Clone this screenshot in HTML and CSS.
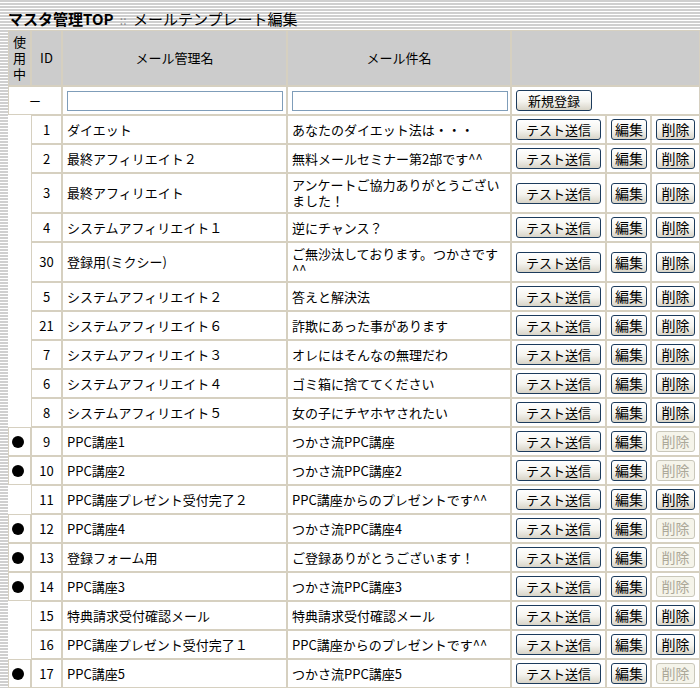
FILE: index.html
```html
<!DOCTYPE html>
<html lang="ja">
<head>
    <meta charset="UTF-8">
    <title>メールテンプレート編集</title>
    <link rel="stylesheet" href="styles.css">
</head>
<body>
    <div class="page-title"><b>マスタ管理TOP</b> <span class="sep">::</span> メールテンプレート編集</div>

    <table class="list">
        <colgroup>
            <col class="c-use">
            <col class="c-id">
            <col class="c-name">
            <col class="c-subject">
            <col class="c-test">
            <col class="c-edit">
            <col class="c-del">
        </colgroup>
        <thead>
            <tr>
                <th class="use">使用中</th>
                <th>ID</th>
                <th>メール管理名</th>
                <th>メール件名</th>
                <th colspan="3">&nbsp;</th>
            </tr>
        </thead>
        <tbody>
            <!-- 新規登録 -->
            <tr>
                <td colspan="2" class="id">－</td>
                <td><input type="text" class="field"></td>
                <td><input type="text" class="field"></td>
                <td colspan="3"><button type="button" class="btn btn-new">新規登録</button></td>
            </tr>
            <tr>
                <td class="use"></td><td class="id">1</td>
                <td>ダイエット</td><td>あなたのダイエット法は・・・</td>
                <td><button type="button" class="btn btn-test">テスト送信</button></td>
                <td><button type="button" class="btn btn-edit">編集</button></td>
                <td><button type="button" class="btn btn-del">削除</button></td>
            </tr>
            <tr>
                <td class="use"></td><td class="id">2</td>
                <td>最終アフィリエイト２</td><td>無料メールセミナー第2部です^^</td>
                <td><button type="button" class="btn btn-test">テスト送信</button></td>
                <td><button type="button" class="btn btn-edit">編集</button></td>
                <td><button type="button" class="btn btn-del">削除</button></td>
            </tr>
            <tr>
                <td class="use"></td><td class="id">3</td>
                <td>最終アフィリエイト</td><td>アンケートご協力ありがとうございました！</td>
                <td><button type="button" class="btn btn-test">テスト送信</button></td>
                <td><button type="button" class="btn btn-edit">編集</button></td>
                <td><button type="button" class="btn btn-del">削除</button></td>
            </tr>
            <tr>
                <td class="use"></td><td class="id">4</td>
                <td>システムアフィリエイト１</td><td>逆にチャンス？</td>
                <td><button type="button" class="btn btn-test">テスト送信</button></td>
                <td><button type="button" class="btn btn-edit">編集</button></td>
                <td><button type="button" class="btn btn-del">削除</button></td>
            </tr>
            <tr>
                <td class="use"></td><td class="id">30</td>
                <td>登録用(ミクシー)</td><td>ご無沙汰しております。つかさです^^</td>
                <td><button type="button" class="btn btn-test">テスト送信</button></td>
                <td><button type="button" class="btn btn-edit">編集</button></td>
                <td><button type="button" class="btn btn-del">削除</button></td>
            </tr>
            <tr>
                <td class="use"></td><td class="id">5</td>
                <td>システムアフィリエイト２</td><td>答えと解決法</td>
                <td><button type="button" class="btn btn-test">テスト送信</button></td>
                <td><button type="button" class="btn btn-edit">編集</button></td>
                <td><button type="button" class="btn btn-del">削除</button></td>
            </tr>
            <tr>
                <td class="use"></td><td class="id">21</td>
                <td>システムアフィリエイト６</td><td>詐欺にあった事があります</td>
                <td><button type="button" class="btn btn-test">テスト送信</button></td>
                <td><button type="button" class="btn btn-edit">編集</button></td>
                <td><button type="button" class="btn btn-del">削除</button></td>
            </tr>
            <tr>
                <td class="use"></td><td class="id">7</td>
                <td>システムアフィリエイト３</td><td>オレにはそんなの無理だわ</td>
                <td><button type="button" class="btn btn-test">テスト送信</button></td>
                <td><button type="button" class="btn btn-edit">編集</button></td>
                <td><button type="button" class="btn btn-del">削除</button></td>
            </tr>
            <tr>
                <td class="use"></td><td class="id">6</td>
                <td>システムアフィリエイト４</td><td>ゴミ箱に捨ててください</td>
                <td><button type="button" class="btn btn-test">テスト送信</button></td>
                <td><button type="button" class="btn btn-edit">編集</button></td>
                <td><button type="button" class="btn btn-del">削除</button></td>
            </tr>
            <tr>
                <td class="use"></td><td class="id">8</td>
                <td>システムアフィリエイト５</td><td>女の子にチヤホヤされたい</td>
                <td><button type="button" class="btn btn-test">テスト送信</button></td>
                <td><button type="button" class="btn btn-edit">編集</button></td>
                <td><button type="button" class="btn btn-del">削除</button></td>
            </tr>
            <tr>
                <td class="use"><span class="dot"></span></td><td class="id">9</td>
                <td>PPC講座1</td><td>つかさ流PPC講座</td>
                <td><button type="button" class="btn btn-test">テスト送信</button></td>
                <td><button type="button" class="btn btn-edit">編集</button></td>
                <td><button type="button" class="btn btn-del" disabled>削除</button></td>
            </tr>
            <tr>
                <td class="use"><span class="dot"></span></td><td class="id">10</td>
                <td>PPC講座2</td><td>つかさ流PPC講座2</td>
                <td><button type="button" class="btn btn-test">テスト送信</button></td>
                <td><button type="button" class="btn btn-edit">編集</button></td>
                <td><button type="button" class="btn btn-del" disabled>削除</button></td>
            </tr>
            <tr>
                <td class="use"></td><td class="id">11</td>
                <td>PPC講座プレゼント受付完了２</td><td>PPC講座からのプレゼントです^^</td>
                <td><button type="button" class="btn btn-test">テスト送信</button></td>
                <td><button type="button" class="btn btn-edit">編集</button></td>
                <td><button type="button" class="btn btn-del">削除</button></td>
            </tr>
            <tr>
                <td class="use"><span class="dot"></span></td><td class="id">12</td>
                <td>PPC講座4</td><td>つかさ流PPC講座4</td>
                <td><button type="button" class="btn btn-test">テスト送信</button></td>
                <td><button type="button" class="btn btn-edit">編集</button></td>
                <td><button type="button" class="btn btn-del" disabled>削除</button></td>
            </tr>
            <tr>
                <td class="use"><span class="dot"></span></td><td class="id">13</td>
                <td>登録フォーム用</td><td>ご登録ありがとうございます！</td>
                <td><button type="button" class="btn btn-test">テスト送信</button></td>
                <td><button type="button" class="btn btn-edit">編集</button></td>
                <td><button type="button" class="btn btn-del" disabled>削除</button></td>
            </tr>
            <tr>
                <td class="use"><span class="dot"></span></td><td class="id">14</td>
                <td>PPC講座3</td><td>つかさ流PPC講座3</td>
                <td><button type="button" class="btn btn-test">テスト送信</button></td>
                <td><button type="button" class="btn btn-edit">編集</button></td>
                <td><button type="button" class="btn btn-del" disabled>削除</button></td>
            </tr>
            <tr>
                <td class="use"></td><td class="id">15</td>
                <td>特典請求受付確認メール</td><td>特典請求受付確認メール</td>
                <td><button type="button" class="btn btn-test">テスト送信</button></td>
                <td><button type="button" class="btn btn-edit">編集</button></td>
                <td><button type="button" class="btn btn-del">削除</button></td>
            </tr>
            <tr>
                <td class="use"></td><td class="id">16</td>
                <td>PPC講座プレゼント受付完了１</td><td>PPC講座からのプレゼントです^^</td>
                <td><button type="button" class="btn btn-test">テスト送信</button></td>
                <td><button type="button" class="btn btn-edit">編集</button></td>
                <td><button type="button" class="btn btn-del">削除</button></td>
            </tr>
            <tr>
                <td class="use"><span class="dot"></span></td><td class="id">17</td>
                <td>PPC講座5</td><td>つかさ流PPC講座5</td>
                <td><button type="button" class="btn btn-test">テスト送信</button></td>
                <td><button type="button" class="btn btn-edit">編集</button></td>
                <td><button type="button" class="btn btn-del" disabled>削除</button></td>
            </tr>
        </tbody>
    </table>
</body>
</html>
```

FILE: styles.css
```css
body {
    margin: 8px 0 0 8px;
    font-family: "Noto Sans CJK JP", "Noto Sans", sans-serif;
    font-size: 13px;
    color: #000;
    background: repeating-linear-gradient(to bottom, #cfcfcf 0, #cfcfcf 2px, #fff 2px, #fff 3px);
}

.page-title {
    height: 22px;
    line-height: 22px;
    font-size: 15px;
}

.page-title .sep {
    color: #888;
    font-size: 12px;
    margin: 0 3px;
}

/* 一覧テーブル */
.list {
    width: 692px;
    table-layout: fixed;
    border-collapse: separate;
    border-spacing: 0;
    empty-cells: hide;
    background-color: #fff;
}

.c-use { width: 23px; }
.c-id { width: 31px; }
.c-name { width: 225px; }
.c-subject { width: 224px; }
.c-test { width: 95px; }
.c-edit { width: 45px; }
.c-del { width: 49px; }

.list th, .list td {
    border: 1px solid #d6d0c0;
    padding: 3px 4px;
    line-height: 16px;
    vertical-align: middle;
}

.list th {
    background-color: #cccccc;
    font-weight: normal;
    text-align: center;
}

.list td {
    background-color: #fff;
    text-align: left;
}

.list td.use {
    padding: 3px;
}

.list td.id {
    text-align: center;
}

.dot {
    display: block;
    width: 12px;
    height: 12px;
    border-radius: 50%;
    background-color: #000;
}

.field {
    display: block;
    width: 216px;
    height: 20px;
    box-sizing: border-box;
    border: 1px solid #7f9db9;
    padding: 0 2px;
    font: 13px "Noto Sans CJK JP", sans-serif;
}

/* ボタン */
.btn {
    display: block;
    height: 21px;
    padding: 0;
    border: 1px solid #1c3b5c;
    border-radius: 3px;
    background: linear-gradient(#ffffff, #f4f3ee 55%, #d8d4c8);
    font: 13px/19px "Noto Sans CJK JP", sans-serif;
    color: #000;
    cursor: pointer;
}

.btn:disabled {
    border-color: #c9c7ba;
    background: #f5f4ea;
    color: #aca899;
    cursor: default;
}

.btn-new { width: 76px; }
.btn-test { width: 85px; }
.btn-edit { width: 36px; font-size: 14px; }
.btn-del { width: 39px; font-size: 14px; }
```
